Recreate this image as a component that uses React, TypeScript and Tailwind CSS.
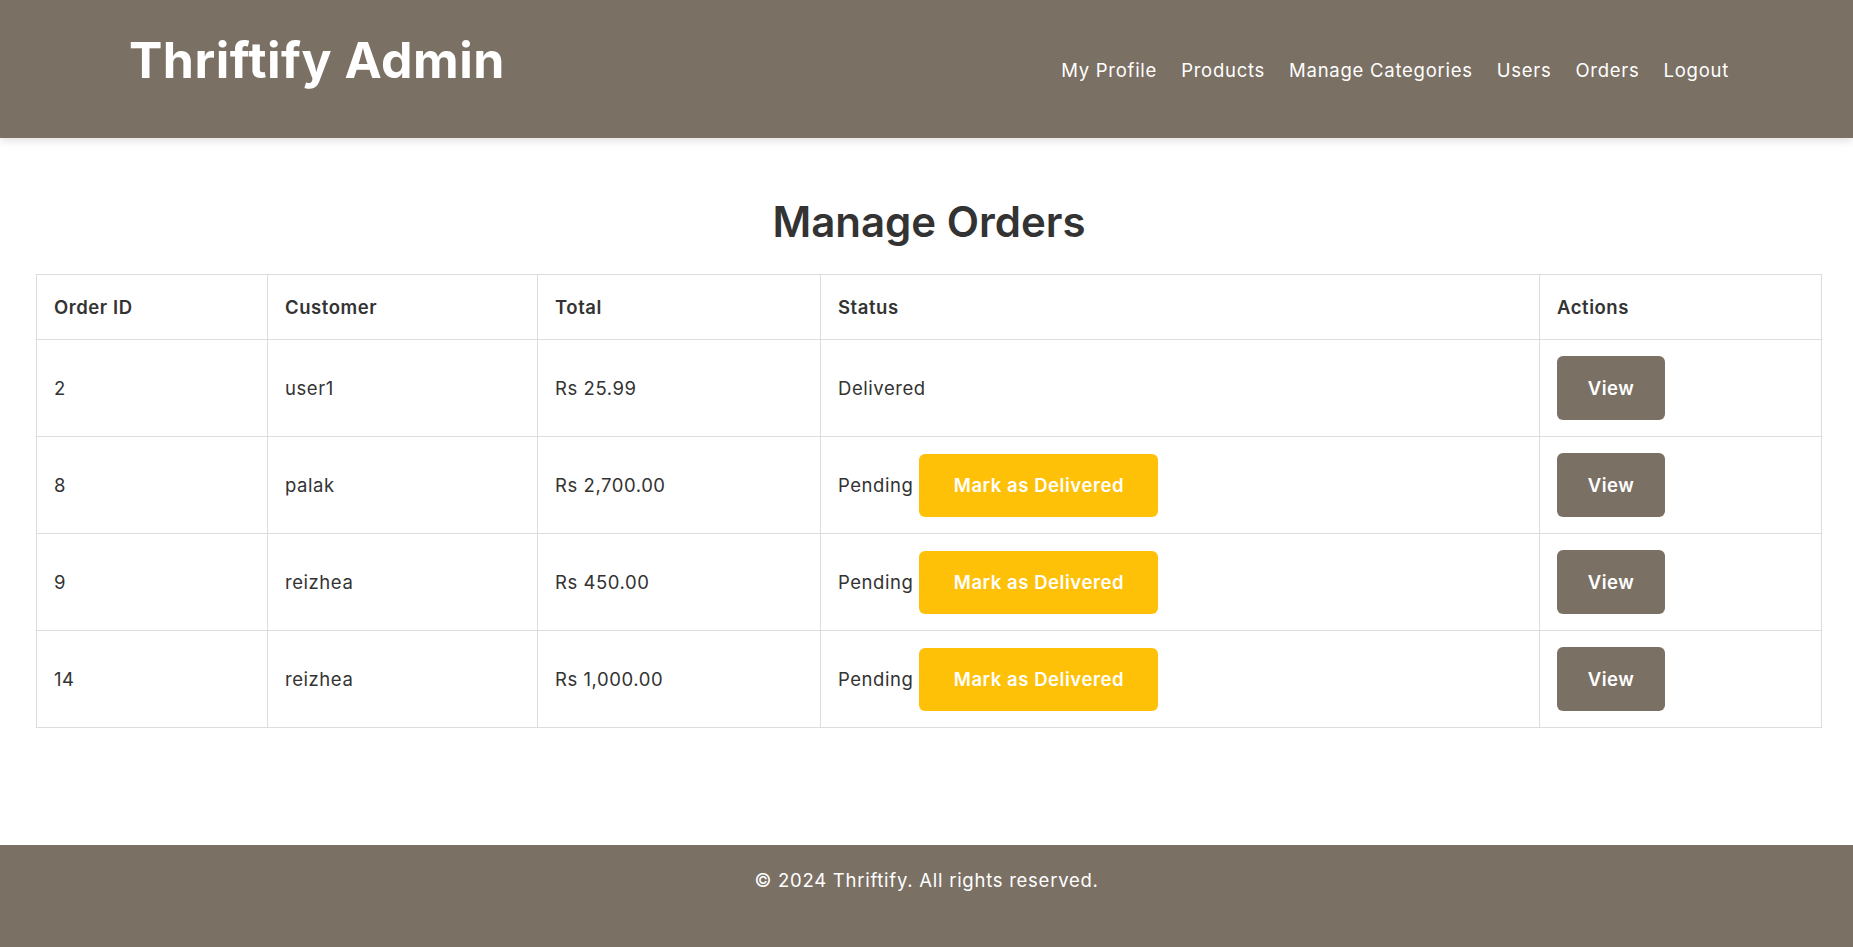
import React from 'react';

type Order = {
  id: number;
  customer: string;
  total: string;
  status: 'Delivered' | 'Pending';
};

const orders: Order[] = [
  { id: 2, customer: 'user1', total: 'Rs 25.99', status: 'Delivered' },
  { id: 8, customer: 'palak', total: 'Rs 2,700.00', status: 'Pending' },
  { id: 9, customer: 'reizhea', total: 'Rs 450.00', status: 'Pending' },
  { id: 14, customer: 'reizhea', total: 'Rs 1,000.00', status: 'Pending' },
];

const navLinks = ['My Profile', 'Products', 'Manage Categories', 'Users', 'Orders', 'Logout'];

export default function App() {
  return (
    <div className="min-h-screen flex flex-col bg-white text-[#333] font-['Inter',sans-serif]">
      {/* Header */}
      <header className="h-[138px] bg-[#7b7064] shadow-[0_3px_8px_rgba(0,0,0,0.12)] relative z-10">
        <div className="flex items-baseline justify-between pl-[129px] pr-[124px] pt-[30px]">
          <h1 className="text-white text-[50px] font-bold leading-[1.2] tracking-[0.01em]">Thriftify Admin</h1>
          <nav className="flex items-baseline gap-[24px] -translate-y-[1px]">
            {navLinks.map((link) => (
              <a key={link} href="#" className="text-white text-[18.5px] leading-[1.5] tracking-[0.04em]">
                {link}
              </a>
            ))}
          </nav>
        </div>
      </header>

      {/* Main content */}
      <main className="flex-1 pt-[59px] pl-[36px] pr-[31px]">
        <h2 className="text-center text-[42px] font-semibold leading-[1.2] text-[#333] mb-[27px]">
          Manage Orders
        </h2>

        <table className="w-full table-fixed border-collapse text-[18.5px] tracking-[0.03em]">
          <thead>
            <tr>
              <th className="w-[231px] h-[65px] border border-[#ddd] px-[17px] text-left font-semibold">Order ID</th>
              <th className="w-[270px] h-[65px] border border-[#ddd] px-[17px] text-left font-semibold">Customer</th>
              <th className="w-[283px] h-[65px] border border-[#ddd] px-[17px] text-left font-semibold">Total</th>
              <th className="h-[65px] border border-[#ddd] px-[17px] text-left font-semibold">Status</th>
              <th className="w-[282px] h-[65px] border border-[#ddd] px-[17px] text-left font-semibold">Actions</th>
            </tr>
          </thead>
          <tbody>
            {orders.map((o) => (
              <tr key={o.id}>
                <td className="h-[97px] border border-[#ddd] px-[17px]">{o.id}</td>
                <td className="h-[97px] border border-[#ddd] px-[17px]">{o.customer}</td>
                <td className="h-[97px] border border-[#ddd] px-[17px]">{o.total}</td>
                <td className="h-[97px] border border-[#ddd] px-[17px]">
                  <div className="flex items-center">
                    <span>{o.status}</span>
                    {o.status === 'Pending' && (
                      <button className="ml-[6px] h-[63px] w-[239px] rounded-[6px] bg-[#ffc107] text-white font-semibold text-[18.5px] tracking-[0.03em]">
                        Mark as Delivered
                      </button>
                    )}
                  </div>
                </td>
                <td className="h-[97px] border border-[#ddd] px-[17px]">
                  <button className="h-[64px] w-[108px] rounded-[6px] bg-[#7b7064] text-white font-semibold text-[18.5px] tracking-[0.03em]">
                    View
                  </button>
                </td>
              </tr>
            ))}
          </tbody>
        </table>
      </main>

      {/* Footer */}
      <footer className="h-[102px] bg-[#7b7064] pt-[22px] text-center">
        <p className="text-white text-[18.5px] leading-[1.5] tracking-[0.04em]">© 2024 Thriftify. All rights reserved.</p>
      </footer>
    </div>
  );
}
